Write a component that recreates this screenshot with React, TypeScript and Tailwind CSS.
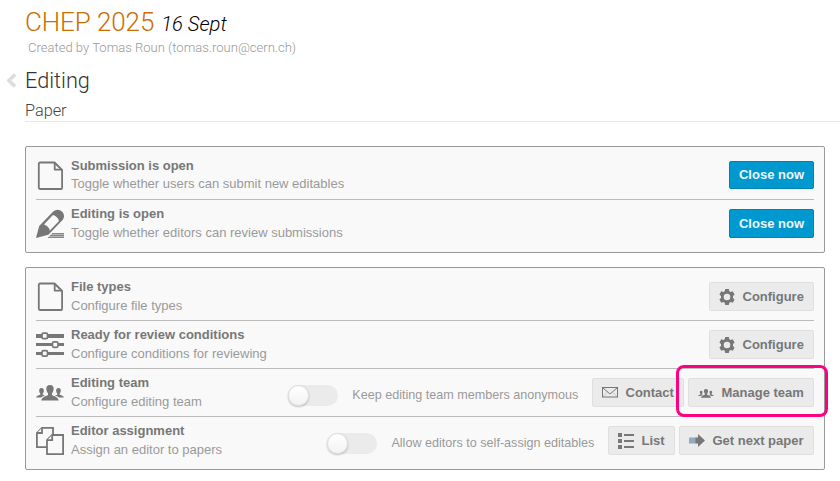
import type { ReactNode } from "react";

function FileIcon() {
  return (
    <svg className="-mt-[2px]" width="28" height="30" viewBox="0 0 28 30" fill="none" stroke="#777" strokeWidth="1.8" strokeLinejoin="round">
      <path d="M4 2.5H18.5L26.1 10V28a1 1 0 0 1-1 1H4a1.2 1.2 0 0 1-1.2-1.2V3.7A1.2 1.2 0 0 1 4 2.5Z" />
      <path d="M18.7 2.8V9.6H25.8" />
    </svg>
  );
}

function PencilIcon() {
  return (
    <svg width="28" height="30" viewBox="0 0 28 30">
      <path fill="#777" d="M0 29L3.2 17L17.5 2.3Q20.2.2 23.2 1Q27.8 2.6 28 7Q28 9 26.8 10.8L12.4 25.8Z" />
      <path fill="#f9f9f9" d="M16.9 6Q21.6 7.3 23 12L13.8 21.4Q12.6 17 8 15.6Z" />
      <path fill="#b5b5b5" d="M16.5 24H28V29H11.5Z" />
      <path stroke="#888" strokeWidth="1" d="M16 24.5H28M14 26.5H28M12 28.5H28" />
    </svg>
  );
}

function SlidersIcon() {
  return (
    <svg width="28" height="30" viewBox="0 0 28 30">
      <g fill="#777">
        <rect y="4" width="28" height="4" />
        <rect y="13" width="28" height="3" />
        <rect y="22" width="28" height="3" />
      </g>
      <g fill="#f9f9f9" stroke="#777" strokeWidth="1.7">
        <rect x="6" y="3.2" width="5.5" height="5.5" rx="1.5" />
        <rect x="16.5" y="11.8" width="5.5" height="5.5" rx="1.5" />
        <rect x="6" y="20.7" width="5.5" height="5.5" rx="1.5" />
      </g>
    </svg>
  );
}

function TeamIcon({ width = 28, height = 16 }: { width?: number; height?: number }) {
  return (
    <svg className="mt-px" width={width} height={height} viewBox="0 0 28 16" preserveAspectRatio="none" fill="#777">
      <path d="M14 0C16.8 0 17.9 1.8 17.6 4.4C17.4 6.3 16.6 7.5 16 8.2V9.7C16.5 11.3 22 11 22.8 15.6H5.2C6 11 11.5 11.3 12 9.7V8.2C11.4 7.5 10.6 6.3 10.4 4.4C10.1 1.8 11.2 0 14 0Z" />
      <path d="M5.5 3C7.5 3 8 4.5 7.8 6.2C7.6 7.5 7 8.3 6.7 8.7V9.7L9 10.5Q6 11.3 5 12.6H0Q.3 10.6 4.3 9.7V8.7C3.9 8 3.4 7.5 3.2 6.2C3 4.5 3.5 3 5.5 3Z" />
      <path d="M22.5 3C20.5 3 20 4.5 20.2 6.2C20.4 7.5 21 8.3 21.3 8.7V9.7L19 10.5Q22 11.3 23 12.6H28Q27.7 10.6 23.7 9.7V8.7C24.1 8 24.6 7.5 24.8 6.2C25 4.5 24.5 3 22.5 3Z" />
    </svg>
  );
}

function CopyIcon() {
  return (
    <svg width="28" height="30" viewBox="0 0 28 30" fill="#f9f9f9" stroke="#777" strokeWidth="1.8">
      <path d="M6 1.8H17V21.2H.9V7Z" />
      <path d="M6 1.8V7H.9" />
      <path d="M16.2 9H27.1V28.2H11V14.2Z" />
      <path d="M16.2 9V14.2H11" />
    </svg>
  );
}

function GearIcon() {
  return (
    <svg width="16" height="16" viewBox="0 0 16 16">
      <path
        fill="#777"
        fillRule="evenodd"
        d="M6.2 0H9.8L10.3 2.2L11.6 3L13.8 2.3L15.6 5.4L14 7V9L15.6 10.6L13.8 13.7L11.6 13L10.3 13.8L9.8 16H6.2L5.7 13.8L4.4 13L2.2 13.7L.4 10.6L2 9V7L.4 5.4L2.2 2.3L4.4 3L5.7 2.2ZM8 4.7A3.3 3.3 0 1 0 8 11.3A3.3 3.3 0 1 0 8 4.7Z"
      />
    </svg>
  );
}

function MailIcon() {
  return (
    <svg width="16" height="11" viewBox="0 0 16 11" fill="none" stroke="#777">
      <rect x=".5" y=".5" width="15" height="9.5" />
      <path d="M.8.8L8 7L15.2.8" strokeWidth="1" />
      <path d="M.8 9.7L5.6 5M15.2 9.7L10.4 5" strokeWidth=".3" />
    </svg>
  );
}

function ListIcon() {
  return (
    <svg width="16" height="16" viewBox="0 0 16 16" fill="#777">
      <path d="M0 0H4V4H0ZM0 6H4V10H0ZM0 12H4V16H0ZM6 1H16V3H6ZM6 7H16V9H6ZM6 13H16V15H6Z" />
    </svg>
  );
}

function NextIcon() {
  return (
    <svg width="16" height="13" viewBox="0 0 16 13">
      <path fill="#93a9bd" d="M0 3.5H7V9.5H0Z" />
      <path fill="#777" d="M6.5 3.5H9V0L16 6.5L9 13V9.5H6.5Z" />
    </svg>
  );
}

function Button({ icon, width, children }: { icon: ReactNode; width: string; children: ReactNode }) {
  return (
    <button className={`flex h-[29px] shrink-0 items-center rounded-[2px] border border-[#dfdfdf] bg-[#ebebeb] pl-[9px] text-[13px] font-bold text-[#777] ${width}`}>
      <span className="mr-[7.5px] flex w-4 shrink-0 items-center justify-center">{icon}</span>
      <span className="whitespace-nowrap">{children}</span>
    </button>
  );
}

function CloseButton({ height = "h-[29px]" }: { height?: string }) {
  return (
    <button className={`w-[85px] shrink-0 rounded-[2px] border border-[#0080b3] bg-[#0099cf] text-[13px] font-bold text-[#ecf5f9] ${height}`}>
      Close now
    </button>
  );
}

function Toggle({ label }: { label: string }) {
  return (
    <div className="mr-[13.6px] flex items-start">
      <span className="mt-[7px] flex h-[21px] w-[50px] items-center rounded-full bg-[#ebebeb]">
        <span className="size-[21px] rounded-full border border-[#ddd] bg-linear-to-b from-white to-[#f3f3f3] shadow-[0_1px_2px_rgba(0,0,0,0.25)]" />
      </span>
      <span className="ml-[14px] mt-2 whitespace-nowrap text-[12.6px] leading-[18px] text-[#999]">{label}</span>
    </div>
  );
}

function Row({ icon, title, text, textLeading = "leading-5", children }: { icon: ReactNode; title: string; text: string; textLeading?: string; children: ReactNode }) {
  return (
    <div className="flex h-12 border-b border-[#bbb] last:h-[47px] last:border-b-0">
      <div className="flex h-[47px] w-7 shrink-0 items-center justify-center">{icon}</div>
      <div className="ml-[7px] mt-[5px] whitespace-nowrap text-[13px]">
        <div className="font-bold leading-[18px] text-[#777]">{title}</div>
        <div className={`text-[#999] ${textLeading}`}>{text}</div>
      </div>
      <div className="ml-auto flex items-start pt-[9px]">{children}</div>
    </div>
  );
}

export default function App() {
  return (
    <main className="h-[481px] w-[840px] overflow-hidden bg-white font-['Liberation_Sans',Arial,sans-serif]">
      <header className="h-[146px] pl-[25px] font-[Roboto,sans-serif] font-light">
        <h1 className="flex h-[37px] items-baseline pt-[6px] text-[26px] leading-[32px] tracking-[-0.1px] text-[#cc6d00]">
          CHEP 2025
          <span className="ml-[7px] text-[20.2px] italic tracking-normal text-black">16 Sept</span>
        </h1>
        <p className="ml-[3px] h-[22px] text-[13.05px] leading-[21px] text-[#999]">Created by Tomas Roun (tomas.roun@cern.ch)</p>
        <div className="relative flex h-[38px] items-center">
          <svg className="absolute -left-[19px] top-[14px]" width="11" height="15" viewBox="0 0 11 15" fill="none" stroke="#ddd" strokeWidth="3.7">
            <path d="M9 1.5L3 7.5L9 13.5" />
          </svg>
          <h2 className="pt-[6px] text-[21.7px] leading-7 text-[#333]">Editing</h2>
        </div>
        <h3 className="h-[25px] border-b border-[#e8e8e8] text-[16.3px] leading-[28px] text-[#444]">Paper</h3>
      </header>

      <section className="ml-[25px] h-[107px] w-[800px] rounded-[2px] border border-[#999] bg-[#f9f9f9] px-[10px] py-[5px]">
        <Row icon={<FileIcon />} title="Submission is open" text="Toggle whether users can submit new editables" textLeading="leading-[18px]">
          <CloseButton height="h-7" />
        </Row>
        <Row icon={<PencilIcon />} title="Editing is open" text="Toggle whether editors can review submissions">
          <CloseButton />
        </Row>
      </section>

      <section className="ml-[25px] mt-[14px] h-[203px] w-[800px] rounded-[2px] border border-[#999] bg-[#f9f9f9] px-[10px] py-[5px]">
        <Row icon={<FileIcon />} title="File types" text="Configure file types">
          <Button icon={<GearIcon />} width="w-[105px]">Configure</Button>
        </Row>
        <Row icon={<SlidersIcon />} title="Ready for review conditions" text="Configure conditions for reviewing">
          <Button icon={<GearIcon />} width="w-[105px]">Configure</Button>
        </Row>
        <Row icon={<TeamIcon />} title="Editing team" text="Configure editing team">
          <Toggle label="Keep editing team members anonymous" />
          <Button icon={<MailIcon />} width="w-[92px]">Contact</Button>
          <div className="relative ml-1">
            <Button icon={<TeamIcon width={16} height={9} />} width="w-[126px]">Manage team</Button>
            <span className="pointer-events-none absolute -left-3 -top-[13px] h-[52px] w-[152px] rounded-[8px] border-[3px] border-[#ff0080]" />
          </div>
        </Row>
        <Row icon={<CopyIcon />} title="Editor assignment" text="Assign an editor to papers">
          <Toggle label="Allow editors to self-assign editables" />
          <Button icon={<ListIcon />} width="w-[67px]">List</Button>
          <div className="ml-1">
            <Button icon={<NextIcon />} width="w-[135px]">Get next paper</Button>
          </div>
        </Row>
      </section>
    </main>
  );
}
